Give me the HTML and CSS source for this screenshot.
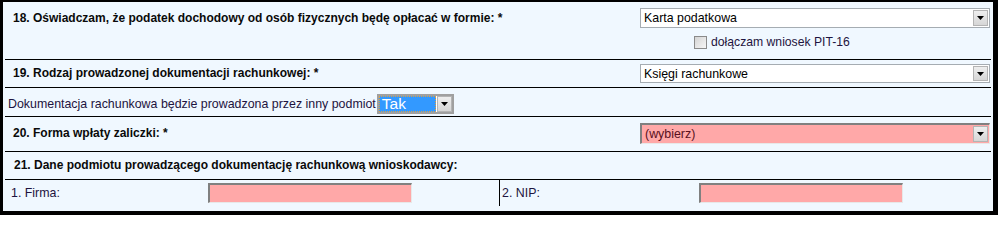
FILE: index.html
```html
<!DOCTYPE html>
<html lang="pl">
<head>
<meta charset="utf-8">
<title>Formularz</title>
<link rel="stylesheet" href="styles.css">
</head>
<body>
<div class="form">
  <div class="row row18">
    <div class="label bold">18. Oświadczam, że podatek dochodowy od osób fizycznych będę opłacać w formie: *</div>
    <div class="right">
      <div class="combo"><span class="value">Karta podatkowa</span><span class="btn"><svg width="7" height="4" viewBox="0 0 7 4"><polygon points="0,0 7,0 3.5,4" fill="#000"/></svg></span></div>
      <label class="check"><span class="box"></span><span>dołączam wniosek PIT-16</span></label>
    </div>
  </div>
  <div class="row row19">
    <div class="label bold">19. Rodzaj prowadzonej dokumentacji rachunkowej: *</div>
    <div class="right">
      <div class="combo"><span class="value">Księgi rachunkowe</span><span class="btn"><svg width="7" height="4" viewBox="0 0 7 4"><polygon points="0,0 7,0 3.5,4" fill="#000"/></svg></span></div>
    </div>
  </div>
  <div class="row rowdoc">
    <span class="plain">Dokumentacja rachunkowa będzie prowadzona przez inny podmiot</span>
    <div class="combo small"><span class="value sel">Tak</span><span class="btn"><svg width="7" height="4" viewBox="0 0 7 4"><polygon points="0,0 7,0 3.5,4" fill="#000"/></svg></span></div>
  </div>
  <div class="row row20">
    <div class="label bold">20. Forma wpłaty zaliczki: *</div>
    <div class="right">
      <div class="combo pink"><span class="value">(wybierz)</span><span class="btn"><svg width="7" height="4" viewBox="0 0 7 4"><polygon points="0,0 7,0 3.5,4" fill="#000"/></svg></span></div>
    </div>
  </div>
  <div class="row row21">
    <div class="label bold">21. Dane podmiotu prowadzącego dokumentację rachunkową wnioskodawcy:</div>
  </div>
  <div class="row rowfields">
    <div class="cell cell-left">
      <span class="plain flabel">1. Firma:</span>
      <span class="input"></span>
    </div>
    <div class="cell cell-right">
      <span class="plain flabel">2. NIP:</span>
      <span class="input"></span>
    </div>
  </div>
</div>
</body>
</html>
```

FILE: styles.css
```css
* { box-sizing: border-box; }
html, body { margin: 0; padding: 0; }
body {
  font-family: "Liberation Sans", Arial, sans-serif;
  font-size: 12px;
  color: #000;
  background: #fff;
}
.form {
  width: 998px;
  height: 215px;
  border-style: solid;
  border-color: #000;
  border-width: 2px 5px 4px 3px;
  background: #f0f8ff;
  padding: 0 2px;
}
.row {
  border-bottom: 1px solid #000;
}
.bold { font-weight: bold; color: #0a0a0a; }
.plain { color: #1e1440; font-size: 12.4px; }

.row18, .row19, .row20 {
  display: grid;
  grid-template-columns: 635px 1fr;
}
.row18 { height: 58px; padding-top: 6px; }
.row19 { height: 28px; padding-top: 4px; }
.row20 { height: 35px; padding-top: 6px; }
.row21 { height: 28px; }

.label { padding-left: 8px; line-height: 20px; }
.row19 .label { line-height: 19px; }
.row20 .label { line-height: 21px; }
.row21 .label { line-height: 27px; padding-left: 9px; }

.right { display: flex; flex-direction: column; }

.combo {
  display: flex;
  width: 350px;
  height: 20px;
  border: 1px solid #a5acb2;
  background: #fff;
}
.row19 .combo { height: 19px; }
.combo .value {
  flex: 1;
  padding-left: 3px;
  line-height: 18px;
  color: #000;
  font-size: 12.4px;
}
.combo .btn {
  width: 15px;
  margin: 1px;
  border: 1px solid #b4b4b4;
  background: linear-gradient(#eeeeee, #d6d6d6);
  display: flex;
  align-items: center;
  justify-content: center;
}
.combo .btn svg { display: block; }

.combo.pink {
  height: 21px;
  background: #ffa8a8;
  border-style: solid;
  border-width: 2px 1px 1px 2px;
  border-color: #808080 #e8e8e8 #e8e8e8 #808080;
}
.combo.pink .value { color: #5a1020; line-height: 18px; }

.check {
  display: flex;
  align-items: center;
  margin-top: 7px;
  margin-left: 54px;
  gap: 4px;
  color: #1e1440;
  font-size: 12.2px;
}
.check .box {
  width: 13px;
  height: 13px;
  border: 1px solid #8a8a8a;
  background: linear-gradient(135deg, #d4d4d4, #f6f6f6);
}

.rowdoc {
  height: 29px;
  padding-top: 6px;
  padding-left: 3px;
  display: flex;
  align-items: flex-start;
  gap: 1px;
}
.rowdoc .plain { line-height: 20px; }
.combo.small {
  width: 77px;
  height: 20px;
  border: 2px solid #a0a0a0;
  background: #fff;
}
.combo.small .value.sel {
  background: #3399ff;
  color: #fff;
  border: 1px dotted #e0a040;
  line-height: 14px;
  font-size: 15.5px;
  padding-left: 2px;
}
.combo.small .btn { width: 15px; margin: 0 0 0 1px; }

.rowfields {
  border-bottom: none;
  height: 26px;
  display: grid;
  grid-template-columns: 495px 1fr;
}
.cell {
  display: flex;
  align-items: flex-start;
  padding-top: 3px;
}
.cell-left { border-right: 1px solid #000; padding-left: 6px; }
.cell-right { padding-left: 2px; }
.flabel { width: 197px; line-height: 20px; }
.input {
  width: 204px;
  height: 20px;
  background: #ffa8a8;
  border-style: solid;
  border-width: 2px 1px 1px 2px;
  border-color: #808080 #e8e8e8 #e8e8e8 #808080;
}
```
